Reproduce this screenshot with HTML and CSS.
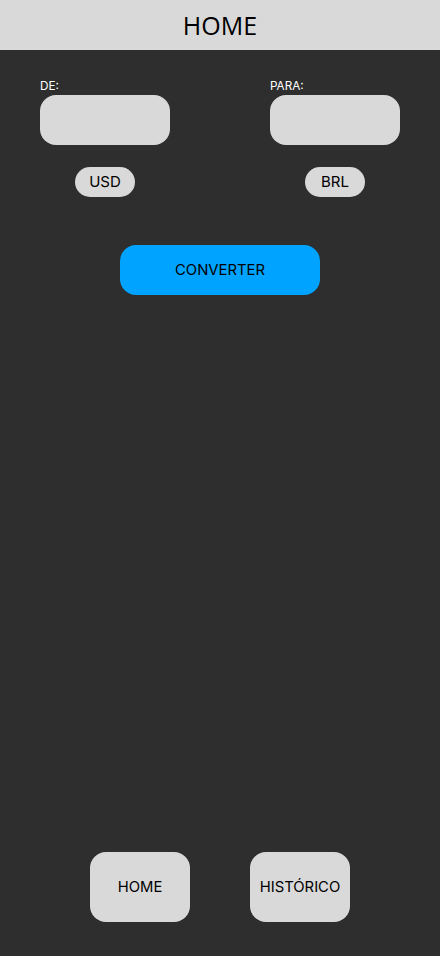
FILE: index.html
```html
<!DOCTYPE html>
<html lang="pt">
<head>
<meta charset="utf-8">
<title>Home</title>
<link rel="stylesheet" href="styles.css">
</head>
<body>
<div class="app">
  <header class="topbar">HOME</header>
  <main class="content">
    <div class="fields">
      <div class="field">
        <label class="field-label">DE:</label>
        <input class="field-input" type="text">
        <span class="currency">USD</span>
      </div>
      <div class="field">
        <label class="field-label">PARA:</label>
        <input class="field-input" type="text">
        <span class="currency">BRL</span>
      </div>
    </div>
    <button class="convert">CONVERTER</button>
  </main>
  <nav class="bottom-nav">
    <button class="nav-btn">HOME</button>
    <button class="nav-btn">HISTÓRICO</button>
  </nav>
</div>
</body>
</html>
```
FILE: styles.css
```css
* { box-sizing: border-box; }
html, body { margin: 0; padding: 0; }
body {
  background: #2e2e2e;
  font-family: Inter, "Noto Sans", sans-serif;
}
.app {
  min-height: 956px;
  display: flex;
  flex-direction: column;
}
.topbar {
  height: 50px;
  background: #d9d9d9;
  color: #000;
  font-family: "Open Sans", "Noto Sans", sans-serif;
  font-size: 25px;
  line-height: 50px;
  text-align: center;
}
.content {
  display: flex;
  flex-direction: column;
  align-items: center;
  padding-top: 30px;
}
.fields {
  width: 100%;
  display: flex;
  justify-content: space-between;
  padding: 0 40px;
}
.field {
  width: 130px;
  display: flex;
  flex-direction: column;
  align-items: center;
}
.field-label {
  align-self: flex-start;
  color: #fff;
  font-size: 11.7px;
  line-height: 13px;
  margin-bottom: 2px;
}
.field-input {
  width: 130px;
  height: 50px;
  border: none;
  border-radius: 16px;
  background: #d9d9d9;
  outline: none;
  margin: 0;
}
.currency {
  margin-top: 22px;
  width: 60px;
  height: 30px;
  border-radius: 15px;
  background: #d9d9d9;
  color: #000;
  font-size: 15px;
  line-height: 30px;
  text-align: center;
}
.convert {
  margin-top: 48px;
  width: 200px;
  height: 50px;
  border: none;
  border-radius: 16px;
  background: #00a3ff;
  color: #000;
  font-family: Inter, sans-serif;
  font-size: 14.8px;
  padding: 0;
}
.bottom-nav {
  margin-top: auto;
  display: flex;
  justify-content: center;
  gap: 60px;
  padding-bottom: 34px;
}
.nav-btn {
  width: 100px;
  height: 70px;
  border: none;
  border-radius: 16px;
  background: #d9d9d9;
  color: #000;
  font-family: Inter, sans-serif;
  font-size: 14.8px;
  padding: 0;
}
```
